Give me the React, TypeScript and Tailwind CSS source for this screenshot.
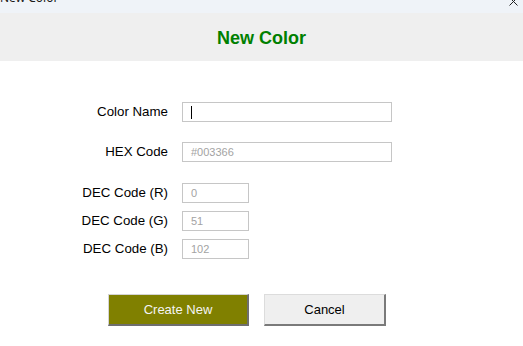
import React from "react";

function Field({ label, width, value, caret, muted = true }: { label: string; width: string; value?: string; caret?: boolean; muted?: boolean }) {
  return (
    <div className="flex items-center">
      <div className="w-[168px] text-right text-[13.3px] leading-none text-black">{label}</div>
      <div className={`ml-[14px] h-[20px] ${width} border border-[#c6c6c6] bg-white flex items-center pl-[8px] text-[11px] ${muted ? "text-[#a3a3a3]" : "text-black"}`}>
        {caret ? <div className="w-px h-[13px] bg-black" /> : value}
      </div>
    </div>
  );
}

export default function App() {
  return (
    <div className="w-[523px] h-[346px] bg-white overflow-hidden font-['Liberation_Sans',Arial,sans-serif]">
      <div className="h-[13px] bg-[#eff3f8] flex justify-between overflow-hidden">
        <div className="-mt-[9px] text-[12px] leading-[14px] text-[#1a1a1a] font-['Noto_Sans',sans-serif]">New Color</div>
        <svg className="mr-[5px] -mt-[3px]" width="9" height="9" viewBox="0 0 9 9">
          <path d="M0.5 0.5 L8.5 8.5 M8.5 0.5 L0.5 8.5" stroke="#222" strokeWidth="1" />
        </svg>
      </div>
      <div className="h-[48px] bg-[#efefef] flex items-center justify-center pt-[2px]">
        <h1 className="text-[18px] font-bold text-[#008000] leading-none">New Color</h1>
      </div>
      <div className="pt-[41px] flex flex-col">
        <Field label="Color Name" width="w-[210px]" caret />
        <div className="mt-[20px]">
          <Field label="HEX Code" width="w-[210px]" value="#003366" />
        </div>
        <div className="mt-[21px] flex flex-col gap-[8px]">
          <Field label="DEC Code (R)" width="w-[67px]" value="0" />
          <Field label="DEC Code (G)" width="w-[67px]" value="51" />
          <Field label="DEC Code (B)" width="w-[67px]" value="102" />
        </div>
        <div className="mt-[35px] pl-[108px] flex gap-[15px]">
          <button className="w-[141px] h-[32px] bg-[#808000] border-t border-l border-[#d4d4d4] border-r-2 border-b-2 border-r-[#6e6e6e] border-b-[#6e6e6e] text-[13px] text-[#f4f4f4] flex items-center justify-center">
            Create New
          </button>
          <button className="w-[122px] h-[32px] bg-[#efefef] border-t border-l border-[#dcdcdc] border-r-2 border-b-2 border-r-[#7a7a7a] border-b-[#7a7a7a] text-[13px] text-black flex items-center justify-center">
            Cancel
          </button>
        </div>
      </div>
    </div>
  );
}
